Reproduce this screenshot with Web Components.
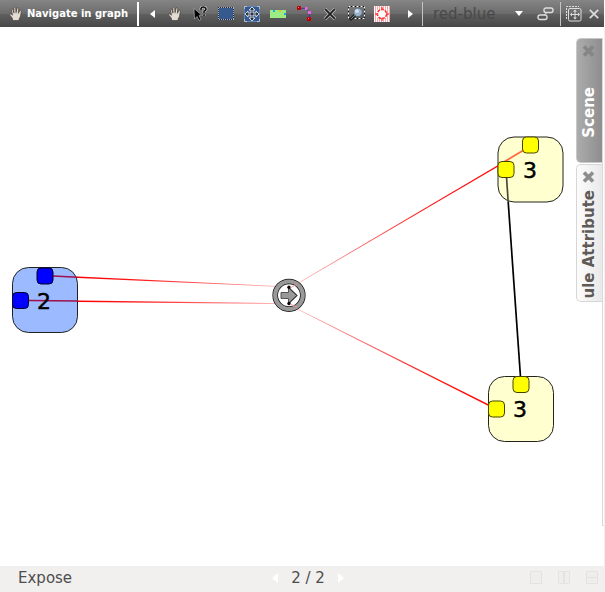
<!DOCTYPE html>
<html lang="en">
<head>
<meta charset="utf-8">
<title>Graph view</title>
<style>
html,body{margin:0;height:100%;background:#fff;font-family:"DejaVu Sans",sans-serif}
</style>
</head>
<body>
<graph-app></graph-app>
<script>
const define = (name, html) => {
  const t = document.createElement('template');
  t.innerHTML = html;
  customElements.define(name, class extends HTMLElement {
    constructor() {
      super();
      this.attachShadow({mode: 'open'}).appendChild(t.content.cloneNode(true));
    }
  });
};

define('tool-button', `<style>
:host{display:block;flex:0 0 auto;width:26px;height:27px}
button{all:unset;display:flex;align-items:center;justify-content:center;width:100%;height:100%;box-sizing:border-box;white-space:nowrap;color:inherit;font:inherit}
</style><button type="button"><slot></slot></button>`);

define('hand-icon', `<style>:host{display:block}svg{display:block}</style>
<svg width="13" height="15" viewBox="0 0 12 14" preserveAspectRatio="none"><path d="M3.500 13.600 2.800 11 .6 8.400Q.3 7 1.800 7.200L3.200 8.600 2.100 3.200Q2.400 2 3.400 2.800L4.500 6.500 4.500 1.600Q5.300.3 6.200 1.600L6.500 6.200 7.500 1.800Q8.400 1.100 9 2.300L8.700 6.800 9.900 4.200Q11 3.600 11.400 4.700L10.700 9.500 9.300 12.300V13.600Z" fill="#e4ddd3" stroke="#4a443e" stroke-width=".7"/><path d="M4.600 6.500V7.500M6.500 6.200V7.300M8.600 6.800V7.600" stroke="#a69e94" stroke-width=".5"/></svg>`);

define('tool-bar', `<style>
:host{display:flex;align-items:center;height:27px;margin-right:1px;color:#fff;background:linear-gradient(#858585,#6c6c6c 50%,#606060 51%,#474747);overflow:hidden}
.mode{width:137px;font-size:10px;font-weight:bold}
.mode hand-icon{margin-right:5px}
i{flex:none;width:1px;height:24px;background:#c4c4c4}
i.first{width:2px;background:#fff}
.prev{width:22px}.prev svg{margin-left:4px}
.next{width:27px}.next svg{margin-left:3px}
.pick{position:relative;flex:1 1 auto;display:flex;align-items:center;min-width:90px}
select{appearance:none;border:0;margin:0;padding:0 24px 0 10px;width:100%;height:26px;background:transparent;color:#484848;font:15px "DejaVu Sans",sans-serif;opacity:1}
.pick svg{position:absolute;right:0;pointer-events:none}
.link{width:37px}.link svg{margin-left:8px}
.new{width:25px}.close{width:16px;margin-right:2px}
svg{display:block}
</style>
<tool-button class="mode"><hand-icon></hand-icon><span>Navigate in graph</span></tool-button>
<i class="first"></i>
<tool-button class="prev" aria-label="Previous tools"><svg width="5" height="8"><path d="M5 0V8L0 4Z" fill="#fff"/></svg></tool-button>
<tool-button aria-label="Navigate"><hand-icon></hand-icon></tool-button>
<tool-button aria-label="Get information"><svg width="16" height="16" viewBox="0 0 16 16"><path d="M2 2.500 9.500 9 7 9.500 9 13.500 7 14.500 5 10.500 2.500 13Z" fill="#000" stroke="#aaa" stroke-width=".7"/><path d="M9 4V2.500Q9.500 1 11.500 1T14 3Q14 4.500 12 5.300V7M12 8.300V10" fill="none" stroke="#bbb" stroke-width="3"/><path d="M9 4V2.500Q9.500 1 11.500 1T14 3Q14 4.500 12 5.300V7M12 8.300V10" fill="none" stroke="#111" stroke-width="1.500"/></svg></tool-button>
<tool-button aria-label="Select rectangle"><svg width="16" height="13" shape-rendering="crispEdges"><path d="M.5.5H15.500V12.500H.5Z" fill="#36598f" stroke="#222a36"/><path d="M1 .5H16M1 12.500H16M.5 1V13M15.500 1V13" fill="none" stroke="#a9b0bb" stroke-dasharray="1 1"/></svg></tool-button>
<tool-button aria-label="Edit selection"><svg width="16" height="16" viewBox="0 0 16 16"><path d="M.5.5H15.500V15.500H.5Z" fill="#36598f" stroke="#6483b4"/><path d="M.5 3V.5H3M13 .5H15.500V3M15.500 13V15.500H13M3 15.500H.5V13" fill="none" stroke="#a9bdd9"/><path d="M8 1 11 4H9V7H12V5L15 8 12 11V9H9V12H11L8 15 5 12H7V9H4V11L1 8 4 5V7H7V4H5Z" fill="#2a3547" stroke="#e0e2e5" stroke-width=".9"/></svg></tool-button>
<tool-button aria-label="Add nodes"><svg width="16" height="10" viewBox="0 0 16 10"><path d="M0 1H16V9H0Z" fill="#9bed83"/><path d="M3 1h2v2H3ZM14 4h2v2H14Z" fill="#16aee0"/><path d="M9 1h2v2H9Z" fill="#e4c713"/></svg></tool-button>
<tool-button aria-label="Edit edge bends"><svg width="16" height="16" viewBox="0 0 16 16"><path d="M3 2.500 10 2.200 13.500 6 13 13" fill="none" stroke="#35409a"/><rect x="1" width="4" height="4" rx="1" fill="#c00000"/><rect x="11" y="11" width="4" height="4" rx="1" fill="#c00000"/><path d="M2 1h1v1H2ZM12 12h1v1H12Z" fill="#ff7777"/><path d="M9 1h2.500v3H9ZM12 5h3v3H12Z" fill="#ed62e7"/></svg></tool-button>
<tool-button aria-label="Delete"><svg width="12" height="12" viewBox="0 0 12 12"><path d="M1 1 11 11M11 1 1 11" stroke="#b4b4b4" stroke-width="3.400"/><path d="M1.200 1.200 10.800 10.800M10.800 1.200 1.200 10.800" stroke="#202020" stroke-width="1.800"/></svg></tool-button>
<tool-button aria-label="Zoom rectangle"><svg width="17" height="16" viewBox="0 0 17 16"><path d="M.5.5H16.500V12.500H.5Z" fill="none" stroke="#111"/><path d="M.5.5H16.500V12.500H.5Z" fill="none" stroke="#fff" stroke-dasharray="2 2"/><path d="M7 9 2 14" stroke="#222" stroke-width="3"/><path d="M7 9 3 13" stroke="#788" stroke-width="1"/><circle cx="10" cy="6.300" r="4.300" fill="#9cb2c8" stroke="#50677d"/><circle cx="9" cy="5" r="2" fill="#d5e0e9"/></svg></tool-button>
<tool-button aria-label="Fisheye"><svg width="16" height="16" viewBox="0 0 16 16"><path d="M0 0H16V16H0Z" fill="#fff"/><path d="M1 1H16M1 3H16M1 13H16M1 15H16M1 5H3M13 5H16M1 7H3M13 7H16M1 9H3M13 9H16M1 11H3M13 11H16" stroke="#f05050" stroke-dasharray="1 1"/><circle cx="8" cy="8" r="4.600" fill="#fff" stroke="#f33" stroke-width="1.600" stroke-dasharray="3 1"/><path d="M8 1V4M8 12V15M1 8H4M12 8H15" stroke="#f44" stroke-width="1.400"/></svg></tool-button>
<tool-button class="next" aria-label="More tools"><svg width="5" height="8"><path d="M0 0V8L5 4Z" fill="#fff"/></svg></tool-button>
<i></i>
<div class="pick"><select aria-label="Graph" disabled><option>red-blue</option></select><svg width="8" height="5"><path d="M0 0H8L4 5Z" fill="#fff"/></svg></div>
<tool-button class="link" aria-label="Synchronize"><svg width="17" height="14" viewBox="0 0 17 14" fill="none" stroke="#ddd" stroke-width="1.400"><rect x="7" y="1" width="9" height="4.500" rx="2"/><rect x="1" y="8" width="9" height="4.500" rx="2"/><path d="M7 8 10 5.500" stroke-width="1"/></svg></tool-button>
<i></i>
<tool-button class="new" aria-label="Detach view"><svg width="16" height="16" viewBox="0 0 16 16" fill="none" stroke="#ddd"><path d="M.5 13V.5H13" stroke-dasharray="2 1"/><rect x="2.500" y="2.500" width="12.500" height="12.500" rx="1.500"/><path d="M5 8.500H13M9 4.500V12.500"/><path d="M4 8.500 6 6.500V10.500ZM14 8.500 12 6.500V10.500ZM9 3.500 7 5.500H11ZM9 13.500 7 11.500H11Z" fill="#ddd" stroke="none"/></svg></tool-button>
<tool-button class="close" aria-label="Close view"><svg width="10" height="10"><path d="M.8.8 9.200 9.200M9.200.8.8 9.200" stroke="#ddd" stroke-width="1.700"/></svg></tool-button>`);

define('graph-scene', `<style>
:host{display:block;overflow:hidden}
svg{display:block;width:100%;height:100%}
text{font:22px "DejaVu Sans",sans-serif;fill:#000;stroke:#000;stroke-width:.5px}
.n{stroke:#222;stroke-width:1}
.b{fill:#9bbaff}.y{fill:#ffffcf}
.pb{fill:#00f;stroke:#002}.py{fill:#ff0;stroke:#440}
</style>
<svg role="img" aria-label="Graph with three nodes and one rule">
<defs>
<linearGradient id="l" gradientUnits="userSpaceOnUse" x1="78" y1="0" x2="280" y2="0"><stop stop-color="#f00"/><stop offset=".3" stop-color="#ff1818"/><stop offset="1" stop-color="#ffb0b0"/></linearGradient>
<linearGradient id="r" gradientUnits="userSpaceOnUse" x1="298" y1="0" x2="498" y2="0"><stop stop-color="#ffb0b0"/><stop offset=".6" stop-color="#ff2020"/><stop offset="1" stop-color="#f00"/></linearGradient>
</defs>
<g transform="translate(0 -27)">
<rect class="n b" x="12.500" y="267.500" width="65" height="65" rx="16"/>
<rect class="n y" x="498" y="137" width="65" height="65" rx="16"/>
<rect class="n y" x="488.500" y="376.500" width="65" height="65" rx="16"/>
<path d="M78 276.500 282 286.300V287L78 278Z" fill="url(#l)"/>
<path d="M78 300.400 280 303.200V304L78 301.900Z" fill="url(#l)"/>
<path d="M53 276 78 277.200M29 300.500 78 301" stroke="#a0104c" stroke-width="1.500"/>
<path d="M297 283.500 499 164.500V166L297 284.300Z" fill="url(#r)"/>
<path d="M499 165 523 150.500" stroke="#ff6a3c" stroke-width="1.800"/>
<path d="M297 308.500 489 404.500V406.200L297 309.300Z" fill="url(#r)"/>
<path d="M506.500 177 508.200 202" stroke="#4a4a3c" stroke-width="1.700"/>
<path d="M508.200 202 520.500 377" stroke="#000" stroke-width="1.700"/>
<rect class="n pb" x="37" y="268" width="16" height="16" rx="4"/>
<rect class="n pb" x="12.500" y="292.500" width="16" height="16" rx="4"/>
<rect class="n py" x="522.500" y="137" width="16" height="16" rx="4"/>
<rect class="n py" x="498" y="161.500" width="16" height="16" rx="4"/>
<rect class="n py" x="513" y="376.500" width="16" height="16" rx="4"/>
<rect class="n py" x="488.500" y="401" width="16" height="16" rx="4"/>
<text x="37" y="309">2</text><text x="523" y="178">3</text><text x="513" y="417">3</text>
<circle cx="289" cy="295.300" r="13.800" fill="#fff" stroke="#111" stroke-width="5.600"/>
<circle cx="289" cy="295.300" r="13.800" fill="none" stroke="#999" stroke-width="4.200"/>
<path d="M281 292.500H288.500V288L297 295.500 288.500 303V298.500H281Z" fill="#999" stroke="#555"/>
<path d="M289 287.500 297 295.500 289 303.500" fill="none" stroke="#111"/>
<circle cx="289" cy="287.300" r="1.700"/><circle cx="289" cy="303.500" r="1.700"/>
<path d="M290 288 297 284M290 304 297 307" stroke="#f88" stroke-width=".8"/>
</g></svg>`);

define('side-tab', `<style>
:host{display:flex;flex-direction:column;box-sizing:border-box;width:26px;background:linear-gradient(90deg,#fcfcfc,#e9e9e9);border:1px solid #d6d6d6;border-right:0;border-radius:5px 0 0 5px;overflow:hidden;color:#5e5a57;--x:#8d8d8d}
:host([selected]){background:linear-gradient(90deg,#acacac,#8e8e8e);border-color:#c8c8c8;color:#fff;--x:#858585}
button{all:unset;display:block}
.x{flex:none;margin:6px 0 0 5px;width:13px;height:12px}
.c{flex:1;min-height:0;overflow:hidden;margin:var(--gap) 0 2px}
.t{writing-mode:vertical-rl;transform:rotate(180deg);font:bold 15px/24px "DejaVu Sans",sans-serif;white-space:nowrap}
svg{display:block}
</style><button class="x" type="button" aria-label="Close tab"><svg width="13" height="12"><path d="M2 1.500 11 10.500M11 1.500 2 10.500" stroke="var(--x)" stroke-width="3.600"/></svg></button><div class="c"><button class="t" type="button"><slot></slot></button></div>`);

define('side-tabs', `<style>
:host{display:flex;flex-direction:column;box-sizing:border-box;padding-top:11px;gap:1px;position:relative}
.a{height:125px;--gap:30px}.b{height:138px;--gap:7px}
.line{position:absolute;right:0;top:11px;bottom:40px;width:2px;box-sizing:border-box;border-left:1px solid #d9d9d9;border-bottom:1px solid #d9d9d9}
</style><side-tab class="a" selected>Scene</side-tab><side-tab class="b">Rule Attribute</side-tab><div class="line"></div>`);

define('status-bar', `<style>
:host{display:grid;grid-template-columns:1fr auto 1fr;align-items:center;height:26px;padding:0 7px 0 18px;background:#f1f0ef;color:#4d4d4d;font-size:15px;line-height:18px}
button{all:unset;display:block}
.nav,.views{display:flex;align-items:center}
.nav{gap:13px;margin-top:-2px}.views{gap:16px;justify-self:end;margin-top:-3px}
.expose{justify-self:start;margin-top:-2px}
svg{display:block}
</style>
<button class="expose" type="button">Expose</button>
<div class="nav"><button type="button" aria-label="Previous page"><svg width="6" height="10"><path d="M6 0V10L0 5Z" fill="#fff"/></svg></button><span>2 / 2</span><button type="button" aria-label="Next page"><svg width="6" height="10"><path d="M0 0V10L6 5Z" fill="#fff"/></svg></button></div>
<div class="views">
<button type="button" aria-label="One view"><svg width="12" height="13" fill="#efeeed" stroke="#e3e3e2"><path d="M.5.5H11.500V12.500H.5Z"/></svg></button>
<button type="button" aria-label="Side by side"><svg width="12" height="13" fill="#efeeed" stroke="#e3e3e2"><path d="M.5.5H11.500V12.500H.5ZM5.500.5V12.500M6.500.5V12.500"/></svg></button>
<button type="button" aria-label="Stacked"><svg width="12" height="13" fill="#efeeed" stroke="#e3e3e2"><path d="M.5.5H11.500V12.500H.5ZM.5 6.500H11.500"/></svg></button>
</div>`);

define('graph-app', `<style>
:host{display:flex;flex-direction:column;height:100vh}
main{flex:1;display:flex;min-height:0;border-right:1px solid #f0f0f0}
graph-scene{flex:1;min-width:0}
side-tabs{flex:0 0 28px;align-items:flex-start}
</style><tool-bar></tool-bar><main><graph-scene></graph-scene><side-tabs></side-tabs></main><status-bar></status-bar>`);
</script>
</body>
</html>
